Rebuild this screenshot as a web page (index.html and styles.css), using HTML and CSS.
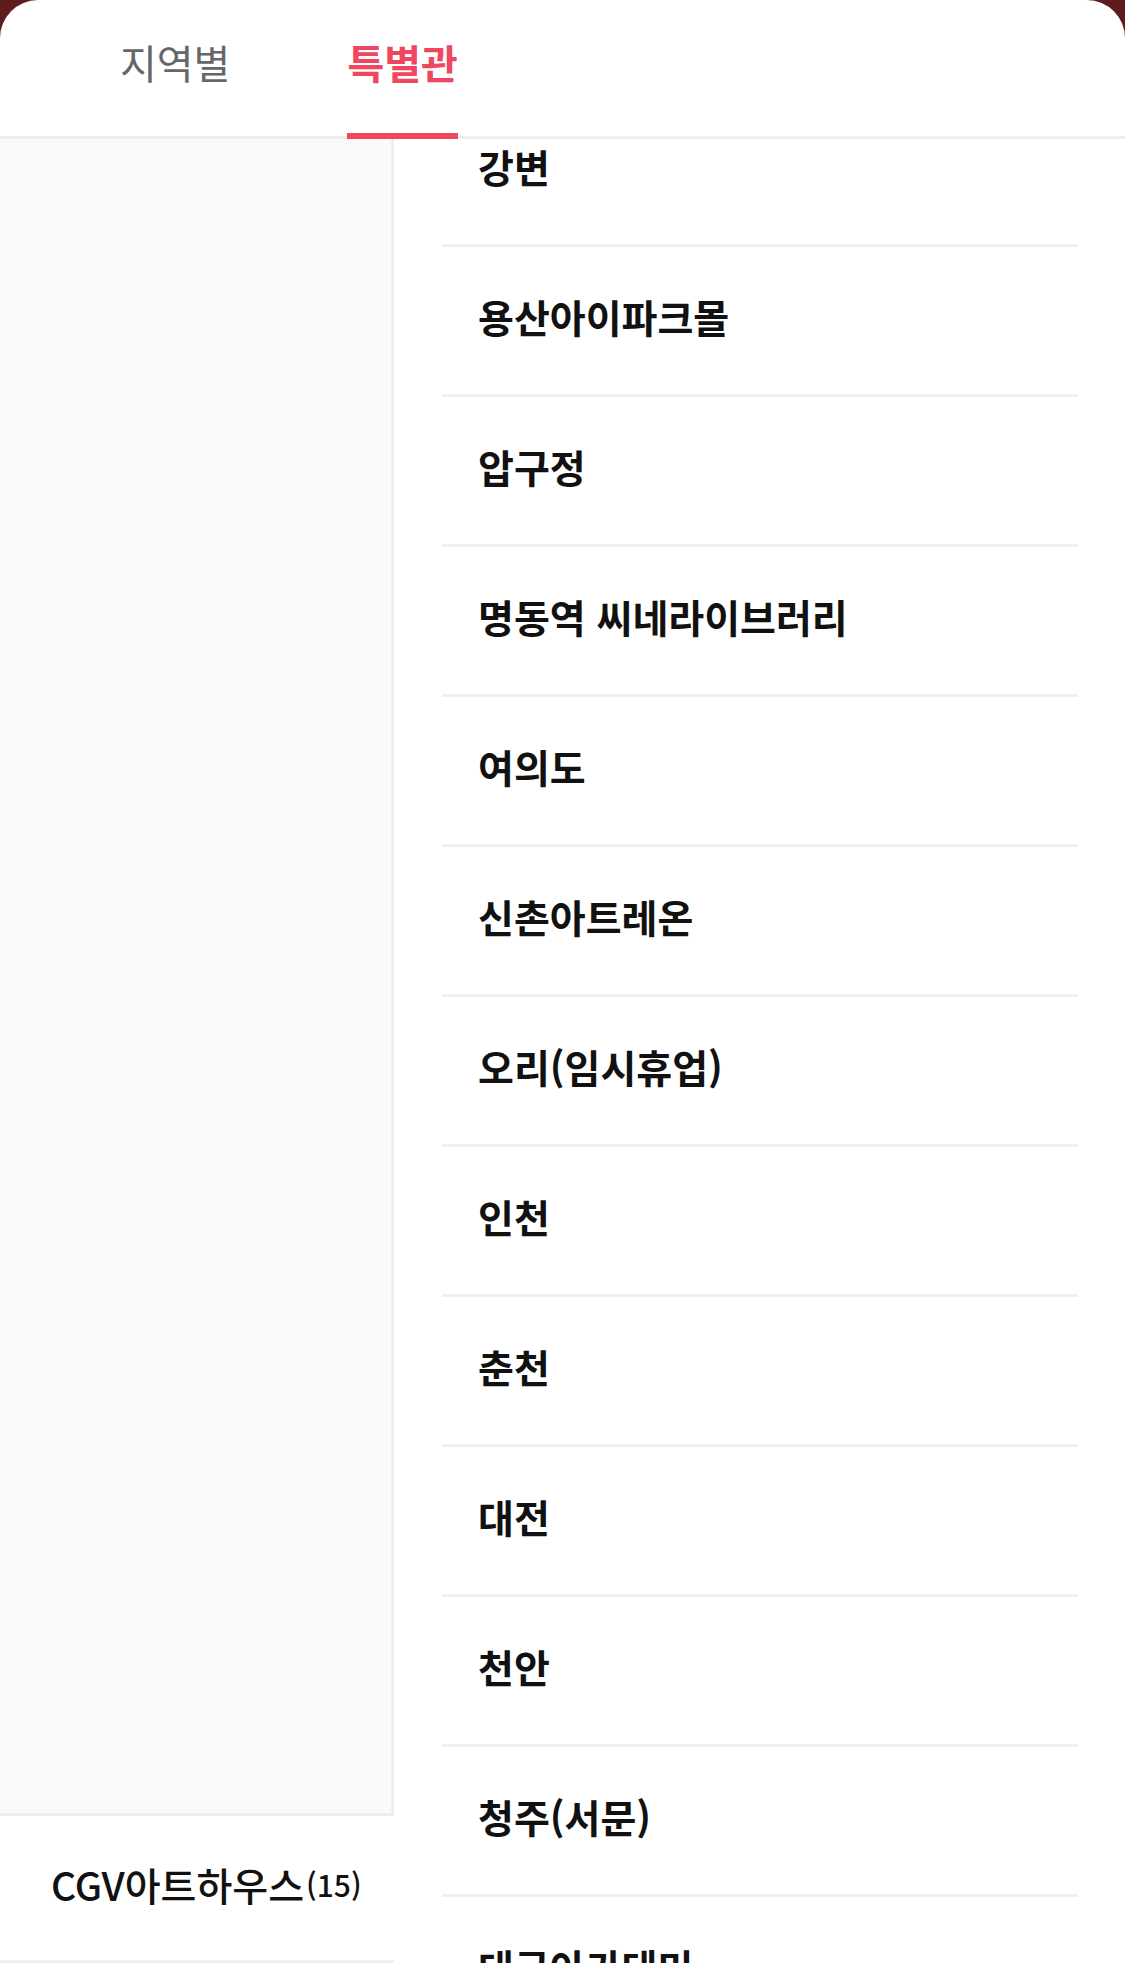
FILE: index.html
```html
<!DOCTYPE html>
<html lang="ko">
<head>
<meta charset="utf-8">
<title>극장 선택</title>
<link rel="stylesheet" href="styles.css">
</head>
<body>
<div class="sheet">
  <div class="tabs">
    <div class="tab">지역별</div>
    <div class="tab active">특별관</div>
  </div>
  <div class="content">
    <div class="side">
      <div class="side-list"></div>
      <div class="side-item selected">CGV아트하우스<span class="count">(15)</span></div>
    </div>
    <div class="main">
      <ul class="theaters">
        <li class="theater">강변</li>
        <li class="theater">용산아이파크몰</li>
        <li class="theater">압구정</li>
        <li class="theater">명동역 씨네라이브러리</li>
        <li class="theater">여의도</li>
        <li class="theater">신촌아트레온</li>
        <li class="theater">오리(임시휴업)</li>
        <li class="theater">인천</li>
        <li class="theater">춘천</li>
        <li class="theater">대전</li>
        <li class="theater">천안</li>
        <li class="theater">청주(서문)</li>
        <li class="theater">대구아카데미</li>
      </ul>
    </div>
  </div>
</div>
</body>
</html>
```
FILE: styles.css
```css
html, body {
  margin: 0;
  padding: 0;
}
body {
  background: #5e1c1e;
  width: 1125px;
  height: 1986px;
  overflow: hidden;
  font-family: "Noto Sans CJK KR", "Noto Sans", sans-serif;
}
.sheet {
  box-sizing: border-box;
  background: #fff;
  height: 1986px;
  padding-bottom: 23px;
  border-radius: 38px 38px 0 0;
  overflow: hidden;
  display: flex;
  flex-direction: column;
}
.tabs {
  display: flex;
  gap: 117px;
  padding-left: 120px;
  height: 136px;
  border-bottom: 3px solid #eeeeee;
  flex-shrink: 0;
}
.tab {
  position: relative;
  font-size: 40px;
  line-height: 38px;
  padding-top: 43px;
  color: #666666;
}
.tab.active {
  color: #ef4760;
  font-weight: 700;
}
.tab.active::after {
  content: "";
  position: absolute;
  left: 0;
  right: 0;
  bottom: -3px;
  height: 6px;
  background: #ef4760;
}
.content {
  display: flex;
  flex: 1;
  min-height: 0;
}
.side {
  width: 394px;
  flex-shrink: 0;
  display: flex;
  flex-direction: column;
  background: #fff;
}
.side-list {
  flex: 1;
  background: #fafafa;
  border-right: 3px solid #eeeeee;
  border-bottom: 3px solid #eeeeee;
}
.side-item {
  box-sizing: border-box;
  height: 147px;
  flex-shrink: 0;
  border-bottom: 3px solid #eeeeee;
  display: flex;
  align-items: center;
  padding-left: 51px;
  padding-bottom: 8px;
  font-size: 39px;
  font-weight: 500;
  color: #111;
}
.side-item .count {
  font-size: 30px;
  margin-left: 2px;
}
.main {
  flex: 1;
  overflow: hidden;
}
.theaters {
  list-style: none;
  margin: -42px 0 0 0;
  padding: 0;
}
.theater {
  box-sizing: border-box;
  height: 150px;
  margin: 0 47px 0 48px;
  padding-left: 36px;
  padding-bottom: 10px;
  border-bottom: 3px solid #efefef;
  display: flex;
  align-items: center;
  font-size: 39px;
  font-weight: 700;
  color: #111;
}
```
